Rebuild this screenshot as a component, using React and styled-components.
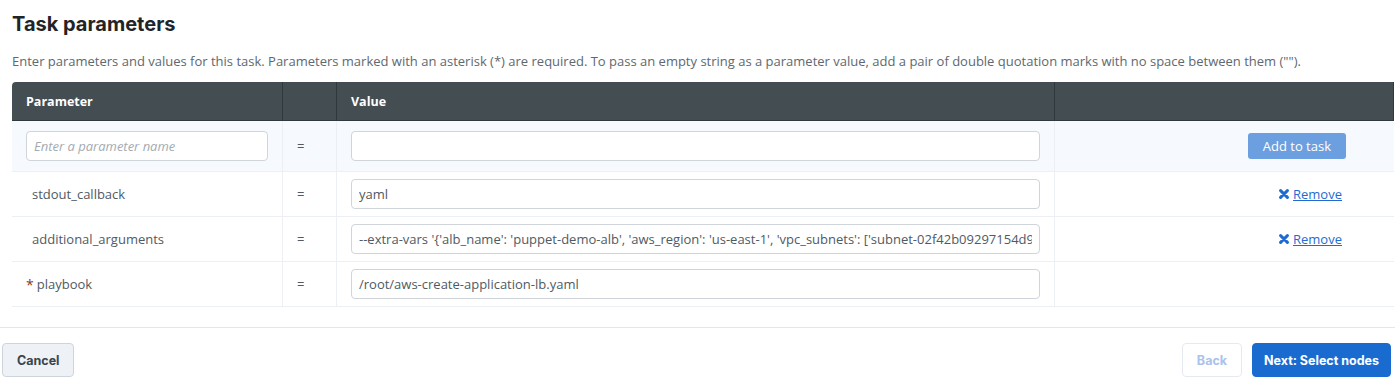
import React from "react";
import styled, { createGlobalStyle } from "styled-components";

const GlobalStyle = createGlobalStyle`
  body {
    margin: 0;
    background: #fff;
    font-family: "Open Sans", "Liberation Sans", sans-serif;
  }
  * { box-sizing: border-box; }
`;

const Page = styled.div`
  width: 1395px;
`;

const Content = styled.section`
  padding: 0 1px 20px 12px;
  border-bottom: 1px solid #e3e6ea;
`;

const Title = styled.h1`
  margin: 0;
  padding-top: 11px;
  font-family: "Inter", "Open Sans", sans-serif;
  font-size: 20px;
  font-weight: 700;
  color: #1f2429;
  line-height: 26px;
`;

const Intro = styled.p`
  margin: 15px 0 12px;
  font-size: 13px;
  line-height: 18px;
  color: #5e6870;
`;

const Table = styled.div`
  display: grid;
  grid-template-columns: 271px 54px 718px 1fr;
`;

const HeadCell = styled.div`
  background: #434d52;
  color: #fff;
  font-weight: 700;
  font-size: 12.5px;
  height: 39px;
  display: flex;
  align-items: center;
  padding-left: 14px;
  border-right: 1px solid #2f383c;
  border-bottom: 1px solid #2f383c;
  &:first-child { border-top-left-radius: 4px; }
  &:last-child {
    border-right: none;
    border-top-right-radius: 6px;
  }
`;

const Cell = styled.div`
  display: flex;
  align-items: center;
  justify-content: ${(p) => (p.$end ? "flex-end" : "flex-start")};
  height: ${(p) => (p.$tall ? "51px" : "45px")};
  background: ${(p) => (p.$shade ? "#f6f9fe" : "#fff")};
  padding: ${(p) => p.$pad || "0 14px"};
  border-right: ${(p) => (p.$last ? "none" : "1px solid #eceff3")};
  border-bottom: 1px solid #eceff3;
  font-size: 13px;
  color: #4f5a63;
`;

const Field = styled.input`
  width: 100%;
  height: 30px;
  border: 1px solid #cfd5db;
  border-radius: 4px;
  background: #fff;
  padding: 0 7px;
  font-family: "Open Sans", "Liberation Sans", sans-serif;
  font-size: 13px;
  color: #4f5a63;
  outline: none;
  &::placeholder {
    color: #a3abb2;
    font-style: italic;
  }
`;

const Star = styled.span`
  color: #8a3a1a;
  font-size: 14px;
  margin-right: 3px;
  margin-left: -6px;
`;

const AddButton = styled.button`
  margin-right: 34px;
  height: 26px;
  padding: 0 15px;
  border: none;
  border-radius: 3px;
  background: #6b9fe0;
  color: #fff;
  font-family: "Open Sans", "Liberation Sans", sans-serif;
  font-size: 13px;
`;

const RemoveLink = styled.a`
  margin-right: 38px;
  display: flex;
  align-items: center;
  gap: 4px;
  color: #1f6bd0;
  font-size: 13px;
  text-decoration: underline;
  cursor: pointer;
`;

const Footer = styled.footer`
  display: flex;
  justify-content: space-between;
  align-items: center;
  padding: 15px 4px 0 2px;
`;

const Actions = styled.div`
  display: flex;
  gap: 10px;
`;

const Button = styled.button`
  height: 34px;
  padding: 0 ${(p) => p.$px || "14px"};
  border-radius: 4px;
  font-family: "Inter", "Open Sans", sans-serif;
  font-size: 12.5px;
  font-weight: 700;
  border: 1px solid
    ${(p) => (p.$variant === "primary" ? "#1a6bd0" : p.$variant === "ghost" ? "#e6eaf0" : "#cdd4dc")};
  background: ${(p) => (p.$variant === "primary" ? "#1a6bd0" : p.$variant === "ghost" ? "#fff" : "#eef2f6")};
  color: ${(p) => (p.$variant === "primary" ? "#fff" : p.$variant === "ghost" ? "#a9c3eb" : "#3b444b")};
`;

const XIcon = () => (
  <svg width="10" height="10" viewBox="0 0 10 10">
    <path d="M1.6 1.6 L8.4 8.4 M8.4 1.6 L1.6 8.4" stroke="#1f6bd0" strokeWidth="3" strokeLinecap="round" />
  </svg>
);

const params = [
  { name: "stdout_callback", value: "yaml", removable: true },
  {
    name: "additional_arguments",
    value:
      "--extra-vars '{'alb_name': 'puppet-demo-alb', 'aws_region': 'us-east-1', 'vpc_subnets': ['subnet-02f42b09297154d9a', 'subnet-0b3c1d8a']}'",
    removable: true,
  },
  { name: "playbook", value: "/root/aws-create-application-lb.yaml", required: true },
];

export default function App() {
  return (
    <Page>
      <GlobalStyle />
      <Content>
        <Title>Task parameters</Title>
        <Intro>
          Enter parameters and values for this task. Parameters marked with an asterisk (*) are required. To pass an
          empty string as a parameter value, add a pair of double quotation marks with no space between them ("").
        </Intro>
        <Table>
          <HeadCell>Parameter</HeadCell>
          <HeadCell />
          <HeadCell>Value</HeadCell>
          <HeadCell />

          <Cell $shade $tall>
            <Field placeholder="Enter a parameter name" />
          </Cell>
          <Cell $shade $tall>=</Cell>
          <Cell $shade $tall>
            <Field />
          </Cell>
          <Cell $shade $tall $end $last>
            <AddButton>Add to task</AddButton>
          </Cell>

          {params.map((p) => (
            <React.Fragment key={p.name}>
              <Cell $pad="0 0 0 20px">
                {p.required && <Star>*</Star>}
                {p.name}
              </Cell>
              <Cell>=</Cell>
              <Cell>
                <Field defaultValue={p.value} readOnly />
              </Cell>
              <Cell $end $last>
                {p.removable && (
                  <RemoveLink>
                    <XIcon />
                    Remove
                  </RemoveLink>
                )}
              </Cell>
            </React.Fragment>
          ))}
        </Table>
      </Content>
      <Footer>
        <Button>Cancel</Button>
        <Actions>
          <Button $variant="ghost" $px="14px">Back</Button>
          <Button $variant="primary" $px="11px">Next: Select nodes</Button>
        </Actions>
      </Footer>
    </Page>
  );
}
